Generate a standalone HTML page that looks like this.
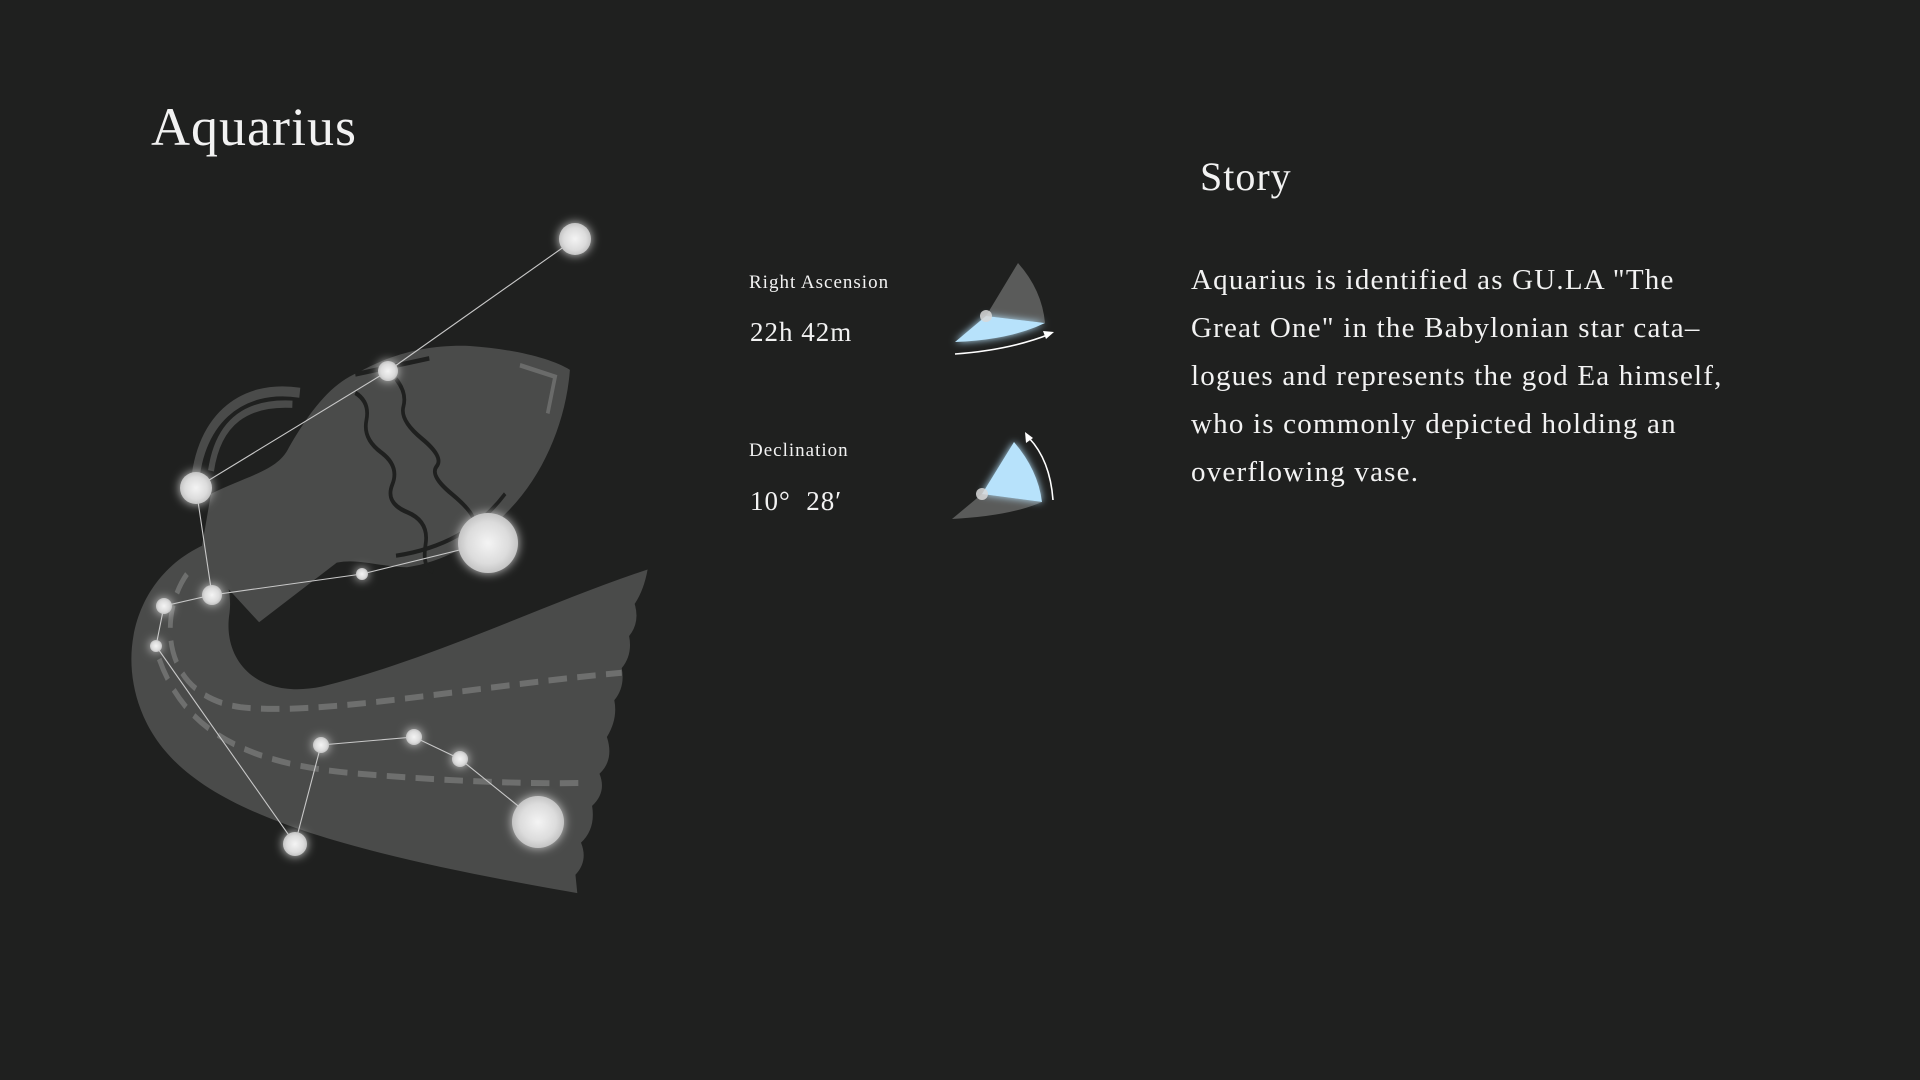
<!DOCTYPE html>
<html><head><meta charset="utf-8">
<style>
html,body{margin:0;padding:0;background:#1f201f;width:1920px;height:1080px;overflow:hidden}
body{position:relative;font-family:"Liberation Serif","Noto Serif CJK SC",serif;color:#f2f2f2}
.t{position:absolute;white-space:nowrap;line-height:1}
</style></head><body>
<div class="t" style="left:151px;top:100px;font-size:54px;letter-spacing:1px">Aquarius</div>
<div class="t" style="left:1200px;top:157px;font-size:40px;letter-spacing:1px">Story</div>
<div class="t" style="left:1191px;top:256px;font-size:29px;line-height:48px;letter-spacing:1.2px">Aquarius is identified as GU.LA "The<br>Great One" in the Babylonian star cata–<br>logues and represents the god Ea himself,<br>who is commonly depicted holding an<br>overflowing vase.</div>
<div class="t" style="left:749px;top:273px;font-size:19px;letter-spacing:1px">Right Ascension</div>
<div class="t" style="left:750px;top:319px;font-size:27px;letter-spacing:1px">22h 42m</div>
<div class="t" style="left:749px;top:441px;font-size:19px;letter-spacing:1px">Declination</div>
<div class="t" style="left:750px;top:488px;font-size:27px;letter-spacing:1px">10°&nbsp; 28′</div>

<svg width="1920" height="1080" style="position:absolute;left:0;top:0">
<defs>
<filter id="g" x="-100%" y="-100%" width="300%" height="300%"><feGaussianBlur stdDeviation="5" result="b"/><feMerge><feMergeNode in="b"/><feMergeNode in="SourceGraphic"/></feMerge></filter>
<filter id="gb" x="-50%" y="-50%" width="200%" height="200%"><feGaussianBlur stdDeviation="4" result="b"/><feMerge><feMergeNode in="b"/><feMergeNode in="SourceGraphic"/></feMerge></filter>
<radialGradient id="s"><stop offset="0" stop-color="#f4f4f4"/><stop offset=".7" stop-color="#dcdcdc"/><stop offset="1" stop-color="#c4c4c4"/></radialGradient>
</defs>
<g transform="translate(100,200) scale(0.37,0.459)">
 <path d="M300,745 C120,800 40,960 110,1110 C200,1300 500,1400 1290,1510 L1285,1470 Q1320,1440 1300,1400 Q1340,1370 1330,1320 Q1370,1290 1350,1250 Q1390,1220 1370,1170 Q1400,1130 1390,1090 Q1420,1060 1410,1020 Q1440,990 1430,950 Q1460,920 1445,880 Q1470,850 1480,805 C1200,880 900,1000 600,1060 C420,1090 330,1000 350,900 C360,840 320,770 300,745 Z" fill="#4a4b4a"/>
 <path d="M270,780 L300,640 C400,600 480,590 510,540 C560,470 620,400 700,375 C800,330 900,315 1000,318 C1120,325 1220,345 1270,370 C1260,480 1200,600 1100,680 C1020,750 920,790 830,800 C760,800 700,780 640,790 L430,920 Z" fill="#4a4b4a"/>
 <path d="M255,640 C260,480 380,400 540,420" fill="none" stroke="#4a4b4a" stroke-width="22"/>
 <path d="M300,590 C320,480 400,440 520,445" fill="none" stroke="#4a4b4a" stroke-width="16"/>
 <path d="M690,420 q40,20 30,60 t40,70 t30,70 t40,60 t50,70 t20,60" fill="none" stroke="#1f201f" stroke-width="10"/>
 <path d="M800,390 q30,30 20,60 t50,70 t40,60 t40,60 t60,60 t20,50" fill="none" stroke="#1f201f" stroke-width="10"/>
 <path d="M690,380 L890,345" stroke="#1f201f" stroke-width="10"/>
 <path d="M800,775 C920,760 1020,720 1095,640" fill="none" stroke="#1f201f" stroke-width="9"/>
 <path d="M1135,360 L1230,385 L1210,465" fill="none" stroke="#6a6b6a" stroke-width="10"/>
 <path d="M235,815 C160,900 160,1080 380,1105 C600,1125 1000,1060 1410,1030" fill="none" stroke="#6e6f6e" stroke-width="13" stroke-dasharray="50,28"/>
 <path d="M160,1000 C230,1160 400,1230 700,1250 C1000,1270 1200,1272 1300,1270" fill="none" stroke="#6e6f6e" stroke-width="13" stroke-dasharray="50,28"/>
</g>
<g stroke="#c8c8c8" stroke-width="1.1" fill="none">
 <polyline points="575,239 388,371 196,488 212,595 362,574 488,543"/>
 <polyline points="212,595 164,606 156,646 295,844 321,745 414,737 460,759 538,822"/>
</g>
<g fill="url(#s)" filter="url(#g)">
 <circle cx="575" cy="239" r="16"/>
 <circle cx="388" cy="371" r="10"/>
 <circle cx="196" cy="488" r="16"/>
 <circle cx="488" cy="543" r="30"/>
 <circle cx="362" cy="574" r="6"/>
 <circle cx="212" cy="595" r="10"/>
 <circle cx="164" cy="606" r="8"/>
 <circle cx="156" cy="646" r="6"/>
 <circle cx="321" cy="745" r="8"/>
 <circle cx="414" cy="737" r="8"/>
 <circle cx="460" cy="759" r="8"/>
 <circle cx="538" cy="822" r="26"/>
 <circle cx="295" cy="844" r="12"/>
</g>
<!-- RA dial -->
<path d="M986,316 L1018,263 Q1042,290 1045,323 Z" fill="#5a5b5a"/>
<path d="M986,316 L1045,323 Q1010,340 955,342 Z" fill="#b7e2fb" filter="url(#gb)"/>
<circle cx="986" cy="316" r="6" fill="#d8d8d8" opacity=".85"/>
<path d="M955,354 Q1010,350 1050,334" fill="none" stroke="#fff" stroke-width="1.6"/>
<path d="M1054,332 L1043,331 L1046,339 Z" fill="#fff"/>
<!-- Dec dial -->
<path d="M982,494 L1042,502 Q1010,516 952,519 Z" fill="#5a5b5a"/>
<path d="M982,494 L1014,442 Q1038,470 1042,502 Z" fill="#b7e2fb" filter="url(#gb)"/>
<circle cx="982" cy="494" r="6" fill="#d8d8d8" opacity=".85"/>
<path d="M1053,500 Q1050,460 1029,438" fill="none" stroke="#fff" stroke-width="1.6"/>
<path d="M1025,432 L1026,443 L1033,438 Z" fill="#fff"/>
</svg>
</body></html>
